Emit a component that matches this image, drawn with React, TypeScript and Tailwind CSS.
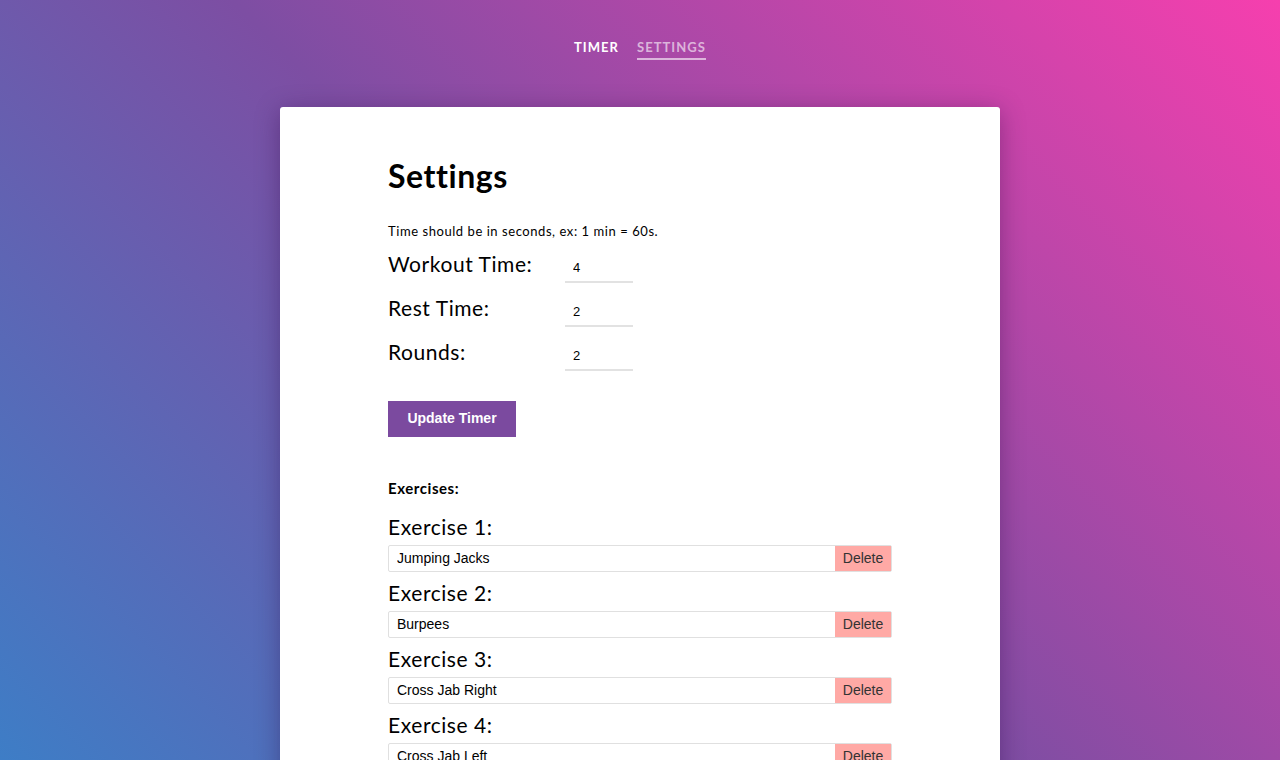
import { useState } from 'react';

const fields = [
  { label: 'Workout Time:', value: '4' },
  { label: 'Rest Time:', value: '2' },
  { label: 'Rounds:', value: '2' },
];

const initialExercises = ['Jumping Jacks', 'Burpees', 'Cross Jab Right', 'Cross Jab Left'];

export default function App() {
  const [exercises, setExercises] = useState(initialExercises);

  return (
    <div className="min-h-screen w-full bg-[linear-gradient(45deg,#3a80c8_0%,#7d4ea3_50%,#f63fae_100%)] font-['Lato',sans-serif] tracking-[0.035em] text-black">
      {/* Nav */}
      <nav className="flex justify-center gap-[18px] pt-[38px] text-[13px] font-bold tracking-[0.08em]">
        <span className="text-white">TIMER</span>
        <span className="border-b-2 border-white/60 text-white/60">SETTINGS</span>
      </nav>

      <div className="mx-auto mt-[47px] w-[720px] rounded-[3px] bg-white px-[108px] pt-[49px] pb-10 shadow-[0_4px_24px_rgba(40,0,60,0.35)]">
        <h1 className="text-[32px] font-bold leading-[40px]">Settings</h1>

        <p className="mt-[27px] text-[13px] leading-[16px]">Time should be in seconds, ex: 1 min = 60s.</p>

        <div className="mt-[3px] flex flex-col">
          {fields.map((f) => (
            <div key={f.label} className="flex h-[44px] items-center">
              <label className="w-[177px] text-[21px] leading-[28px]">{f.label}</label>
              <input
                defaultValue={f.value}
                className="mt-[10px] w-[68px] border-b-2 border-[#e2e2e2] px-2 py-[4px] font-['Liberation_Sans',sans-serif] text-[13px] tracking-normal outline-none"
              />
            </div>
          ))}
        </div>

        <button className="mt-[27px] h-[36px] w-[128px] bg-[#7b4a9f] font-['Liberation_Sans',sans-serif] text-[14px] font-bold tracking-normal text-white">
          Update Timer
        </button>

        <h2 className="mt-[41px] text-[15px] font-bold leading-[20px]">Exercises:</h2>

        <div className="mt-[15px] flex flex-col">
          {exercises.map((ex, i) => (
            <div key={i} className="mb-[7px]">
              <div className="mb-[4px] text-[21px] leading-[28px]">Exercise {i + 1}:</div>
              <div className="flex h-[27px] rounded-[2px] border border-[#e0e0e0]">
                <input
                  defaultValue={ex}
                  className="min-w-0 flex-1 px-2 font-['Liberation_Sans',sans-serif] text-[14px] tracking-normal outline-none"
                />
                <button
                  onClick={() => setExercises(exercises.filter((_, j) => j !== i))}
                  className="w-[56px] bg-[#ffa9a5] font-['Liberation_Sans',sans-serif] text-[14px] tracking-normal text-[#333]"
                >
                  Delete
                </button>
              </div>
            </div>
          ))}
        </div>
      </div>
    </div>
  );
}
